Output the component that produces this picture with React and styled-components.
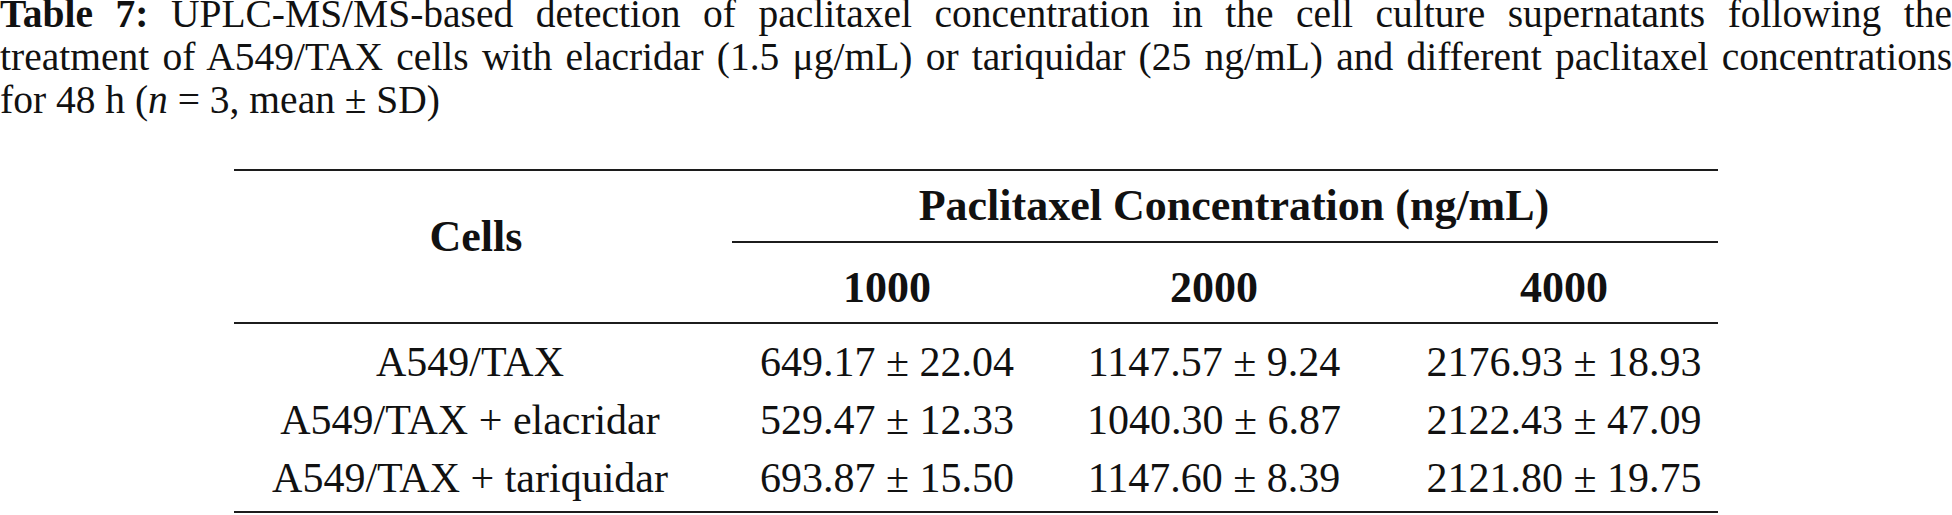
import React from 'react';
import styled, { createGlobalStyle } from 'styled-components';

const GlobalStyle = createGlobalStyle`
  html, body {
    margin: 0;
    padding: 0;
    background: #ffffff;
  }
  body {
    font-family: "Liberation Serif", "Times New Roman", serif;
    color: #111111;
  }
`;

const Page = styled.div`
  width: 1952px;
  height: 515px;
  overflow: hidden;
`;

const Caption = styled.div`
  margin-top: -7px;
  font-size: 39.5px;
  line-height: 43px;
`;

const CaptionLine = styled.div`
  white-space: nowrap;
  text-align: ${(p) => (p.$justify ? 'justify' : 'left')};
  text-align-last: ${(p) => (p.$justify ? 'justify' : 'left')};
`;

const Label = styled.b`
  font-weight: bold;
`;

const Table = styled.div`
  width: 1484px;
  margin: 47px auto 0;
`;

const Head = styled.div`
  display: grid;
  grid-template-columns: 498px 310px 344px 332px;
  grid-template-rows: 70px 2px 79px;
  border-top: 2px solid #1c1c1c;
  border-bottom: 2px solid #1c1c1c;
  font-weight: bold;
  font-size: 44px;
  line-height: 48px;
`;

const CellsHead = styled.div`
  grid-column: 1;
  grid-row: 1 / 4;
  text-align: center;
  padding: 42px 14px 0 0;
`;

const GroupHead = styled.div`
  grid-column: 2 / 5;
  grid-row: 1;
  text-align: center;
  padding: 11px 0 0 18px;
`;

const GroupRule = styled.div`
  grid-column: 2 / 5;
  grid-row: 2;
  background: #1c1c1c;
`;

const ConcHead = styled.div`
  grid-row: 3;
  grid-column: ${(p) => p.$col};
  text-align: center;
  padding: 21px 0 0 ${(p) => (p.$col === 4 ? '24px' : '0')};
`;

const Body = styled.div`
  padding: 9px 0 4px;
  border-bottom: 2px solid #1c1c1c;
  font-size: 42px;
  line-height: 58px;
`;

const Row = styled.div`
  display: grid;
  grid-template-columns: 498px 310px 344px 332px;
  text-align: center;
  white-space: nowrap;

  & > :first-child {
    padding-right: 26px;
  }
  & > :nth-child(4) {
    padding-left: 24px;
  }
`;

const Cell = styled.div``;

const rows = [
  ['A549/TAX', '649.17 ± 22.04', '1147.57 ± 9.24', '2176.93 ± 18.93'],
  ['A549/TAX + elacridar', '529.47 ± 12.33', '1040.30 ± 6.87', '2122.43 ± 47.09'],
  ['A549/TAX + tariquidar', '693.87 ± 15.50', '1147.60 ± 8.39', '2121.80 ± 19.75'],
];

export default function App() {
  return (
    <Page>
      <GlobalStyle />
      <Caption>
        <CaptionLine $justify>
          <Label>Table 7:</Label> UPLC-MS/MS-based detection of paclitaxel concentration in the cell culture supernatants following the
        </CaptionLine>
        <CaptionLine $justify>
          treatment of A549/TAX cells with elacridar (1.5 μg/mL) or tariquidar (25 ng/mL) and different paclitaxel concentrations
        </CaptionLine>
        <CaptionLine>
          for 48 h (<i>n</i> = 3, mean ± SD)
        </CaptionLine>
      </Caption>

      <Table>
        <Head>
          <CellsHead>Cells</CellsHead>
          <GroupHead>Paclitaxel Concentration (ng/mL)</GroupHead>
          <GroupRule />
          <ConcHead $col={2}>1000</ConcHead>
          <ConcHead $col={3}>2000</ConcHead>
          <ConcHead $col={4}>4000</ConcHead>
        </Head>
        <Body>
          {rows.map((r) => (
            <Row key={r[0]}>
              {r.map((c, i) => (
                <Cell key={i}>{c}</Cell>
              ))}
            </Row>
          ))}
        </Body>
      </Table>
    </Page>
  );
}
